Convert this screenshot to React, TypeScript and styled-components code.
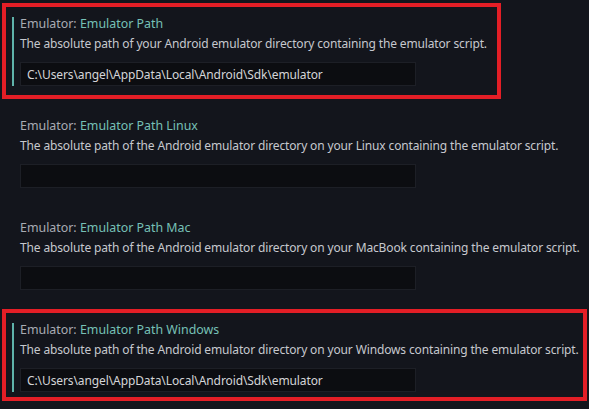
import styled, { createGlobalStyle } from 'styled-components';

const Global = createGlobalStyle`
	body {
		margin: 0;
		background: #13151c;
		font-family: "Noto Sans", "Open Sans", sans-serif;
	}
`;

type Setting = {
	name: string;
	description: string;
	value: string;
	modified: boolean;
	frame?: { width: number; padBottom: number };
};

const SDK_PATH = 'C:\\Users\\angel\\AppData\\Local\\Android\\Sdk\\emulator';

const settings: Setting[] = [
	{
		name: 'Emulator Path',
		description: 'The absolute path of your Android emulator directory containing the emulator script.',
		value: SDK_PATH,
		modified: true,
		frame: { width: 499, padBottom: 9 },
	},
	{
		name: 'Emulator Path Linux',
		description:
			'The absolute path of the Android emulator directory on your Linux containing the emulator script.',
		value: '',
		modified: false,
	},
	{
		name: 'Emulator Path Mac',
		description:
			'The absolute path of the Android emulator directory on your MacBook containing the emulator script.',
		value: '',
		modified: false,
	},
	{
		name: 'Emulator Path Windows',
		description:
			'The absolute path of the Android emulator directory on your Windows containing the emulator script.',
		value: SDK_PATH,
		modified: true,
		frame: { width: 585, padBottom: 5 },
	},
];

export default function App() {
	return (
		<>
			<Global />
			<Page>
				{settings.map((s) => (
					<Section
						key={s.name}
						$highlight={!!s.frame}
						$width={s.frame?.width ?? 499}
						$padBottom={s.frame?.padBottom ?? 9}
					>
						<Item $modified={s.modified}>
							<Title>
								<Category>Emulator: </Category>
								<Name>{s.name}</Name>
							</Title>
							<Description>{s.description}</Description>
							<PathInput readOnly value={s.value} spellCheck={false} />
						</Item>
					</Section>
				))}
			</Page>
		</>
	);
}

const Page = styled.div`
	display: flex;
	flex-direction: column;
	gap: 6px;
	padding: 3px 0 0 2px;
	width: 589px;
	height: 409px;
	box-sizing: border-box;
	overflow: hidden;
`;

// red annotation frame drawn round the settings that matter
const Section = styled.section<{ $highlight: boolean; $width: number; $padBottom: number }>`
	box-sizing: border-box;
	width: ${(p) => p.$width}px;
	border: 4px solid ${(p) => (p.$highlight ? '#e41e26' : 'transparent')};
	padding: 10px 0 ${(p) => p.$padBottom}px 6px;
`;

const Item = styled.div<{ $modified: boolean }>`
	display: flex;
	flex-direction: column;
	align-items: flex-start;
	border-left: 2px solid ${(p) => (p.$modified ? '#5fb3aa' : 'transparent')};
	padding-left: 6px;
`;

const Title = styled.div`
	font-size: 12.4px;
	line-height: 14px;
	white-space: nowrap;
`;

const Category = styled.span`
	color: #a8abb3;
`;

const Name = styled.span`
	color: #76c0b6;
`;

const Description = styled.div`
	margin-top: 4px;
	font-size: 12px;
	line-height: 18px;
	letter-spacing: -0.14px;
	color: #c6c8ce;
	white-space: nowrap;
`;

const PathInput = styled.input`
	margin-top: 9px;
	box-sizing: border-box;
	width: 396px;
	height: 24px;
	padding: 0 6px;
	background: #0c0d11;
	border: 1px solid #1d1f26;
	outline: none;
	color: #d4d5d8;
	font-family: "Noto Sans", "Open Sans", sans-serif;
	font-size: 12px;
	letter-spacing: -0.1px;
`;
